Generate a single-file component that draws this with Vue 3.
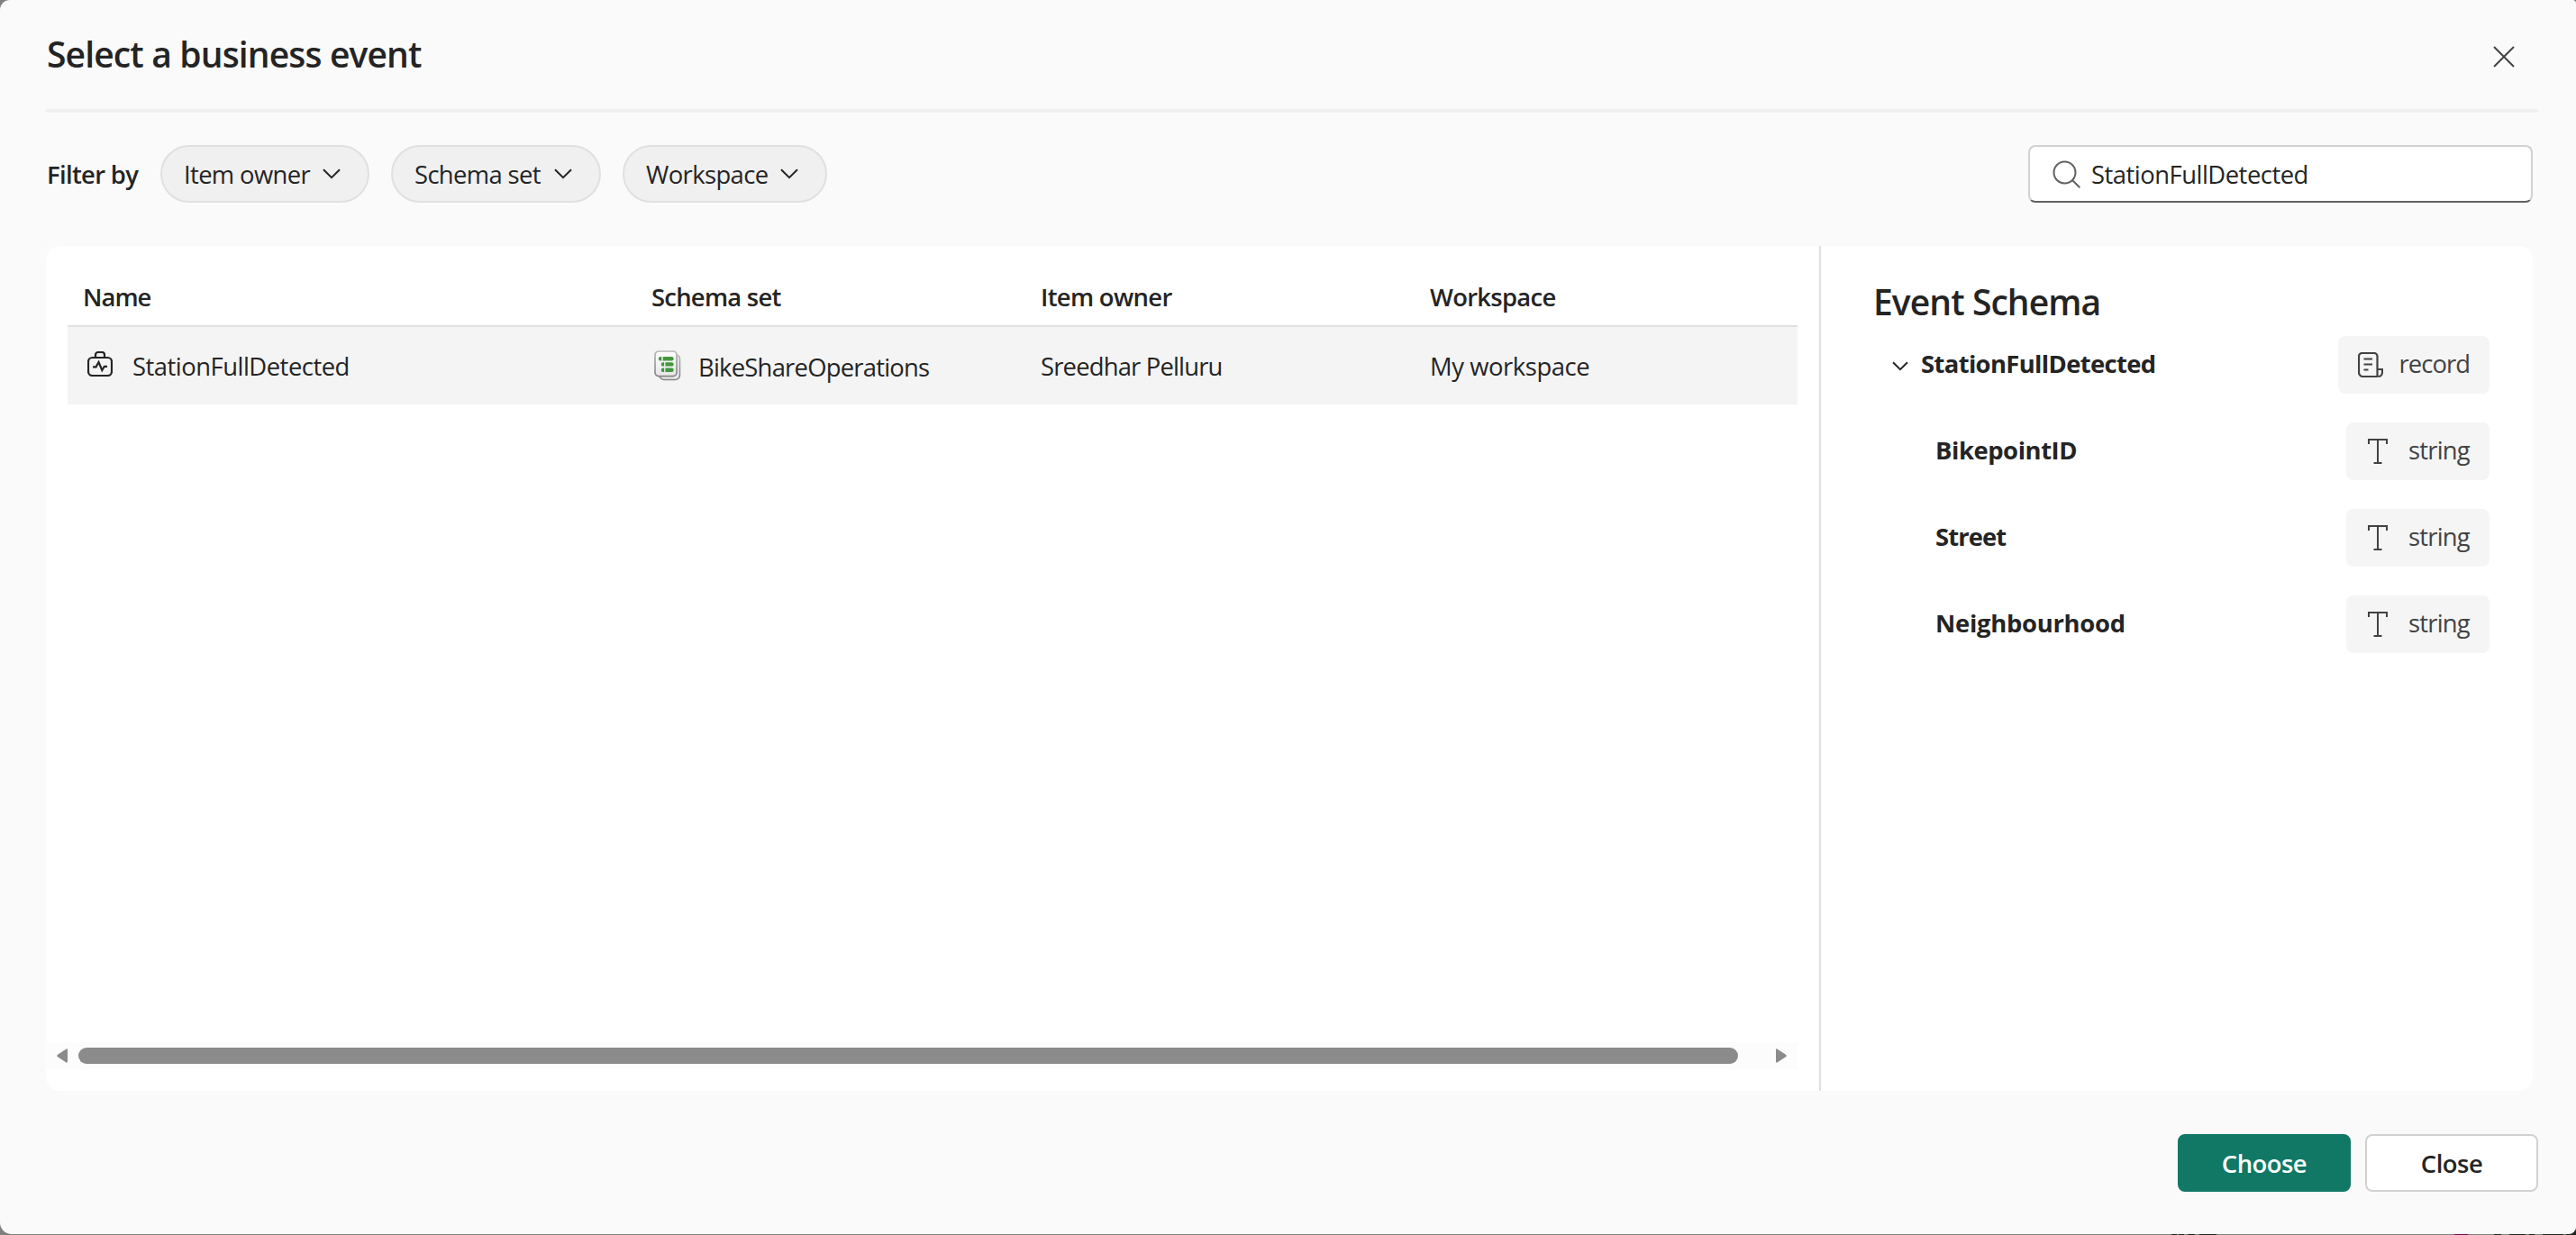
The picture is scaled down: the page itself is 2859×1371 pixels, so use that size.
<script setup>
const filters = [
  { label: 'Item owner', cls: 'f-owner' },
  { label: 'Schema set', cls: 'f-schema' },
  { label: 'Workspace', cls: 'f-work' },
]
const fields = [
  { name: 'BikepointID', cls: 'n-bike' },
  { name: 'Street', cls: 'n-street' },
  { name: 'Neighbourhood', cls: 'n-hood' },
]
</script>

<template>
  <div class="backdrop">
    <div class="dialog">
      <header class="header">
        <h1 class="title"><span class="t-title">Select a business event</span></h1>
        <svg class="dismiss" viewBox="0 0 24 24"><path d="M1 1 23 23M23 1 1 23" /></svg>
      </header>

      <div class="toolbar">
        <span class="filter-label"><span class="t-filter">Filter by</span></span>
        <button v-for="f in filters" :key="f.label" class="chip" :class="f.cls">
          <span class="chip-text">{{ f.label }}</span>
          <svg class="chev" viewBox="0 0 20 12"><path d="M1 1.2 10 10.2 19 1.2" /></svg>
        </button>
        <div class="search">
          <svg class="search-icon" viewBox="0 0 32 32"><circle cx="13.5" cy="13.5" r="12" /><path d="M22 22 30.3 30.3" /></svg>
          <span class="t-search">StationFullDetected</span>
        </div>
      </div>

      <main class="panel">
        <section class="list">
          <div class="row head">
            <div><span class="h-name">Name</span></div>
            <div><span class="h-schema">Schema set</span></div>
            <div><span class="h-owner">Item owner</span></div>
            <div><span class="h-work">Workspace</span></div>
          </div>
          <div class="row item">
            <div>
              <svg class="bag" viewBox="0 0 28 28">
                <rect x="1" y="7" width="26" height="20" rx="4.5" />
                <path d="M9 7V4a3 3 0 0 1 3-3h4a3 3 0 0 1 3 3v3" />
                <path d="M6 17.3h3.6l2.9-5.3 3.8 9 2.5-4.2H22" />
              </svg>
              <span class="c-name">StationFullDetected</span>
            </div>
            <div>
              <svg class="set" viewBox="0 0 30 34">
                <defs>
                  <linearGradient id="sheet" x1="0" y1="0" x2="0" y2="1">
                    <stop offset="0" stop-color="#fff" /><stop offset="1" stop-color="#e6e6e6" />
                  </linearGradient>
                  <linearGradient id="edge" x1="0" y1="0" x2="0" y2="1">
                    <stop offset="0" stop-color="#b8b8b8" /><stop offset="1" stop-color="#858585" />
                  </linearGradient>
                </defs>
                <rect x="6" y="4.5" width="22.5" height="28" rx="5" fill="#e9e9e9" stroke="url(#edge)" stroke-width="1.6" />
                <rect x="1" y="1" width="24" height="27.6" rx="4" fill="url(#sheet)" stroke="url(#edge)" stroke-width="1.7" />
                <g fill="#43973f">
                  <path d="M7 7h1.300v4.400H7a2.200 2.200 0 0 1 0-4.400zM9.700 7h9.800a2.200 2.200 0 0 1 0 4.400H9.700z" />
                  <path d="M9.900 13.200h1.200v4.400H9.900a2.200 2.200 0 0 1 0-4.400zM12.400 13.200h7.100a2.200 2.200 0 0 1 0 4.400H12.400z" />
                  <path d="M9.900 19.500h1.200v4.400H9.900a2.200 2.200 0 0 1 0-4.400zM12.400 19.500h7.100a2.200 2.200 0 0 1 0 4.400H12.400z" />
                </g>
              </svg>
              <span class="c-schema">BikeShareOperations</span>
            </div>
            <div><span class="c-owner">Sreedhar Pelluru</span></div>
            <div><span class="c-work">My workspace</span></div>
          </div>
          <div class="scrollbar">
            <svg class="arrow" viewBox="0 0 12 16"><path d="M12 1.500v13c0 1-1 1.500-1.800.8L1 9.300C0 8.500 0 7.500 1 6.700L10.200.7C11 0 12 .5 12 1.500z" /></svg>
            <div class="thumb"></div>
            <svg class="arrow right" viewBox="0 0 12 16"><path d="M12 1.500v13c0 1-1 1.500-1.800.8L1 9.300C0 8.500 0 7.500 1 6.700L10.200.7C11 0 12 .5 12 1.500z" /></svg>
          </div>
        </section>

        <aside class="schema">
          <h2 class="schema-title"><span class="t-schema">Event Schema</span></h2>
          <div class="node root">
            <svg class="tree-chev" viewBox="0 0 18 11"><path d="M1 1.200 9 9.200 17 1.200" /></svg>
            <span class="label n-root">StationFullDetected</span>
            <span class="badge record">
              <svg class="rec-icon" viewBox="0 0 28 28">
                <path d="M22 27H5.500A4.500 4.500 0 0 1 1 22.500V4.500A3.500 3.500 0 0 1 4.500 1H18A3.500 3.500 0 0 1 21.500 4.500V27M21.500 19H27v3.500A4.500 4.500 0 0 1 22.500 27" />
                <path d="M6.500 7.500h9.500M6.500 13.500h9.500M6.500 19.500h5" />
              </svg>
              <span class="label b-record">record</span>
            </span>
          </div>
          <div v-for="n in fields" :key="n.name" class="node leaf">
            <span class="label" :class="n.cls">{{ n.name }}</span>
            <span class="badge">
              <svg class="str-icon" viewBox="0 0 22 28"><path d="M1 6V1h20v5M11 1v26M6.500 27h9" /></svg>
              <span class="label b-string">string</span>
            </span>
          </div>
        </aside>
      </main>

      <footer class="footer">
        <button class="btn primary"><span class="t-choose">Choose</span></button>
        <button class="btn"><span class="t-close">Close</span></button>
      </footer>
    </div>
  </div>
</template>

<style>
body { margin: 0; }
</style>

<style scoped>
* { box-sizing: border-box; }
.backdrop { width: 2859px; height: 1371px; background: linear-gradient(90deg, #808080 2410px, #222 2410px 2416px, #808080 2416px 2418px, #222 2418px 2424px, #808080 2424px 2428px, #222 2428px 2436px, #808080 2436px 2441px, #222 2441px 2460px, #808080 2460px 2724px, #7a0a50 2724px 2739px, #808080 2739px 2768px, #222 2768px 2776px, #808080 2776px 2785px, #222 2785px 2803px, #808080 2803px 2807px, #222 2807px 2813px, #808080 2813px 2822px, #222 2822px 2845px, #808080 2845px 2848px, #222 2848px) bottom / 100% 6px no-repeat #808080; overflow: hidden; font-family: "Open Sans", "Noto Sans", sans-serif; font-size: 27.4px; line-height: 40px; color: #242424; white-space: nowrap; }
.dialog { width: 2859px; height: 1370px; border-radius: 11px 4px 8px 13px; background: #fafafa; padding: 0 42px 0 51px; display: flex; flex-direction: column; }
svg { fill: none; stroke: currentColor; stroke-width: 2; flex: none; display: block; }
button { font: inherit; color: inherit; margin: 0; }
.header { height: 125px; border-bottom: 4px solid #f0f0f0; display: flex; justify-content: space-between; padding: 32px 26px 0 1px; flex: none; }
.title { margin: 0; font-size: 39px; line-height: 56px; font-weight: 600; }
.t-title { letter-spacing: -.85px; }
.dismiss { width: 24px; height: 24px; margin-top: 19px; color: #424242; }
.toolbar { display: flex; align-items: center; height: 64px; margin: 36px 6px 0 0; flex: none; }
.filter-label { width: 127px; padding: 2px 0 0 1px; font-weight: 600; }
.t-filter { letter-spacing: -.65px; }
.chip { height: 64px; width: 232px; border: 2px solid #e0e0e0; border-radius: 32px; background: #f0f0f0; display: flex; align-items: center; justify-content: space-between; padding: 0 30px 0 24px; margin-right: 24px; letter-spacing: -.64px; }
.chip-text, .t-search { padding-top: 2px; }
.f-schema { width: 233px; }
.f-work { width: 227px; letter-spacing: -.6px; }
.chev { width: 20px; height: 12px; }
.search { margin-left: auto; width: 560px; height: 64px; border: 2px solid #d1d1d1; border-bottom-color: #616161; border-radius: 8px; background: #fff; display: flex; align-items: center; padding-left: 25px; }
.search-icon { width: 32px; height: 32px; color: #616161; margin: 2px 11px 0 0; }
.t-search, .c-name { letter-spacing: -.49px; }
.panel { display: flex; width: 2760px; height: 938px; margin-top: 48px; background: #fff; border-radius: 16px; flex: none; }
.list { width: 1970px; border-right: 2px solid #e0e0e0; display: flex; flex-direction: column; padding: 24px 0; }
.row { display: grid; grid-template-columns: 632px 432px 432px 1fr; width: 1920px; margin-left: 24px; padding-left: 16px; }
.row > div { display: flex; align-items: center; }
.head { height: 66px; border-bottom: 2px solid #e0e0e0; font-weight: 600; }
.head > div { margin-top: 2px; }
.h-name { letter-spacing: -.95px; margin-left: 1px; }
.h-schema { letter-spacing: -.73px; }
.h-owner { letter-spacing: -.67px; }
.h-work { letter-spacing: -.7px; }
.item { height: 86px; background: #f4f4f4; }
.bag { width: 28px; height: 28px; margin: -4px 22px 0 6px; stroke-width: 2.2; }
.set { width: 30px; height: 34px; margin-left: 3px; margin-right: 19px; stroke: none; }
.c-name, .c-owner, .c-work { padding-top: 2px; }
.c-schema { letter-spacing: -.76px; padding-top: 4px; }
.c-owner { letter-spacing: -.81px; }
.c-work { letter-spacing: -.42px; }
.scrollbar { margin-top: auto; width: 1944px; height: 30px; background: #fcfcfc; display: flex; align-items: center; padding: 0 12px; }
.thumb { width: 1842px; height: 18px; border-radius: 9px; background: #8b8b8b; margin-left: 12px; margin-right: 42px; }
.arrow { width: 12px; height: 16px; fill: #8b8b8b; stroke: none; }
.right { transform: scaleX(-1); }
.schema { flex: 1; padding: 34px 48px 0 58px; }
.schema-title { margin: 0 0 10px; font-size: 39px; line-height: 56px; font-weight: 600; }
.t-schema { letter-spacing: -.92px; }
.node { height: 64px; margin-bottom: 32px; display: flex; align-items: center; font-weight: 700; }
.label { margin-top: -3px; }
.root { padding-left: 21px; }
.leaf { padding-left: 69px; }
.n-root { letter-spacing: -.63px; }
.n-bike { letter-spacing: -.43px; }
.n-street { letter-spacing: -.9px; }
.n-hood { letter-spacing: -.27px; }
.tree-chev { width: 18px; height: 11px; margin-right: 14px; margin-top: 3px; }
.badge { margin-left: auto; width: 159px; height: 64px; border-radius: 8px; background: #f5f5f5; color: #424242; font-weight: 400; display: flex; align-items: center; justify-content: space-between; padding: 0 22px 0 24px; }
.record { width: 168px; padding-left: 22px; }
.b-record { letter-spacing: -.95px; }
.b-string { letter-spacing: -.75px; }
.rec-icon { width: 28px; height: 28px; stroke-width: 2.2; }
.str-icon { width: 22px; height: 28px; }
.footer { display: flex; justify-content: flex-end; gap: 16px; margin-top: 48px; }
.btn { width: 192px; height: 64px; border: 2px solid #d1d1d1; border-radius: 8px; background: #fff; font-weight: 600; padding: 2px 0 0; letter-spacing: -.5px; }
.primary { background: #117865; border-color: #117865; color: #fff; }
</style>
